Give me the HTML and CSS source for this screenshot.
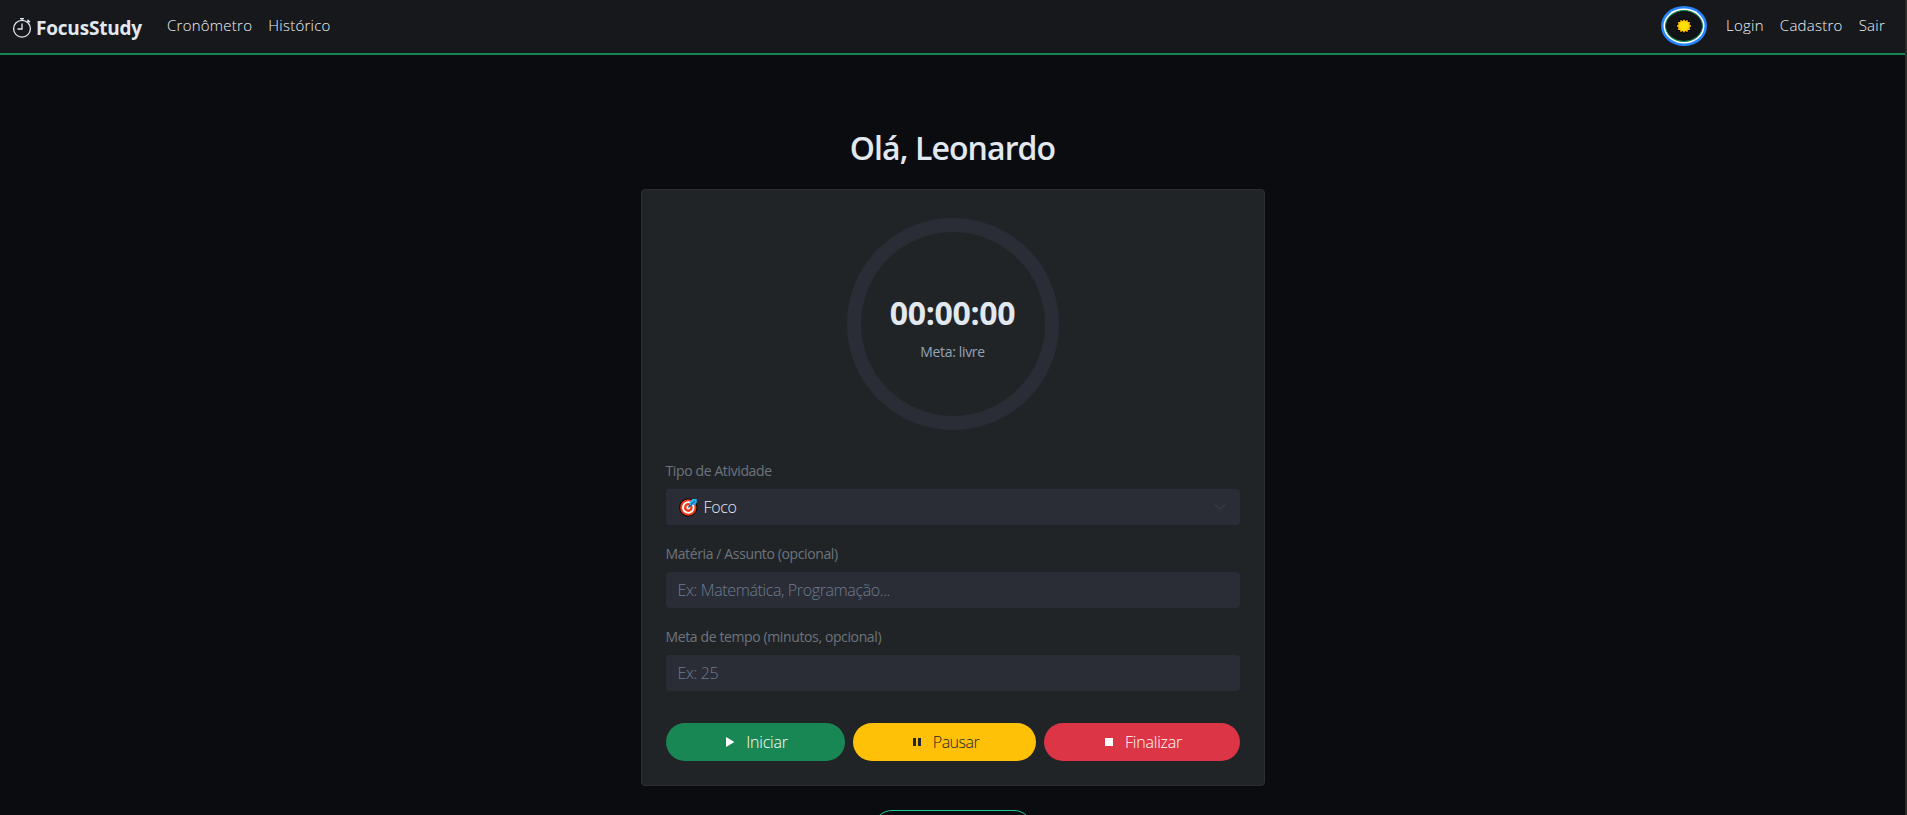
FILE: index.html
```html
<!DOCTYPE html>
<html lang="pt-BR">
<head>
    <meta charset="UTF-8">
    <meta name="viewport" content="width=device-width, initial-scale=1.0">
    <title>FocusStudy</title>
    <link rel="stylesheet" href="styles.css">
</head>
<body>
    <nav class="navbar">
        <a class="brand" href="#">
            <svg width="20" height="20" viewBox="0 0 20 20" fill="none" stroke="currentColor" stroke-width="1.3">
                <circle cx="10" cy="10.7" r="8.4"/>
                <path d="M8 .7h4M10 .7v2M10 5.500v5.500H5.500M15 4.500l2-2M15.500 1.800l2.500 2.500"/>
            </svg>
            <span>FocusStudy</span>
        </a>
        <div class="nav-left">
            <a class="nav-link" href="#">Cronômetro</a>
            <a class="nav-link" href="#">Histórico</a>
        </div>
        <div class="nav-right">
            <button class="theme-toggle" type="button" aria-label="Tema">
                <svg width="16" height="16" viewBox="0 0 16 16">
                    <path d="M8 1l1.200 2L11.500 1.800l.4 2.300 2.300-.1-.7 2.200L15.500 8l-2 1.800.7 2.200-2.300-.1-.4 2.300L9.200 13 8 15l-1.200-2-2.300 1.200-.4-2.300-2.300.1.7-2.200L.5 8l2-1.800L1.800 4l2.300.1.4-2.300L6.800 3z" fill="#ffb900" stroke="#000" stroke-width="1.600" paint-order="stroke"/>
                    <circle cx="8" cy="8" r="4.800" fill="#ffe000"/>
                </svg>
            </button>
            <a class="nav-link" href="#">Login</a>
            <a class="nav-link" href="#">Cadastro</a>
            <a class="nav-link" href="#">Sair</a>
        </div>
    </nav>

    <main class="container">
        <h2 class="title">Olá, Leonardo</h2>

        <div class="card">
            <div class="timer">
                <div class="timer-display">00:00:00</div>
                <div class="timer-goal">Meta: livre</div>
            </div>

            <label class="form-label">Tipo de Atividade</label>
            <div class="field">
                <svg class="target" width="20" height="20" viewBox="0 0 20 20">
                    <circle cx="9.300" cy="10.500" r="8.700" fill="#f03a17" stroke="#000" stroke-width="1"/>
                    <circle cx="9.300" cy="10.500" r="5.300" fill="none" stroke="#fff" stroke-width="1.800"/>
                    <circle cx="9.300" cy="10.500" r="1.900" fill="#fff"/>
                    <path d="M9.300 10.500L16 4" stroke="#1265a8" stroke-width="1.600"/>
                    <path d="M11 8V4.500L13.500 2h4.200v3.500L15 8.200z" fill="#25b8f2"/>
                    <path d="M12 7.500L16 4" stroke="#1265a8" stroke-width="1.200"/>
                </svg>
                <span>Foco</span>
                <svg class="chevron" width="12" height="12" viewBox="0 0 16 16" fill="none" stroke="#343a40" stroke-width="2" stroke-linecap="round" stroke-linejoin="round">
                    <path d="M2 5l6 6 6-6"/>
                </svg>
            </div>

            <label class="form-label" for="materia">Matéria / Assunto (opcional)</label>
            <input class="field" id="materia" type="text" placeholder="Ex: Matemática, Programação...">

            <label class="form-label" for="meta">Meta de tempo (minutos, opcional)</label>
            <input class="field" id="meta" type="text" placeholder="Ex: 25">

            <div class="actions">
                <button class="btn btn-start" type="button">
                    <svg width="8" height="10" viewBox="0 0 8 10" fill="currentColor"><path d="M0 0l8.500 5L0 10z"/></svg>
                    <span>Iniciar</span>
                </button>
                <button class="btn btn-pause" type="button">
                    <svg width="8" height="8" viewBox="0 0 8 8" fill="currentColor"><path d="M0 0h3v8H0zM5 0h3v8H5z"/></svg>
                    <span>Pausar</span>
                </button>
                <button class="btn btn-stop" type="button">
                    <svg width="8" height="8" viewBox="0 0 8 8" fill="currentColor"><path d="M0 0h8v8H0z"/></svg>
                    <span>Finalizar</span>
                </button>
            </div>
        </div>

        <button class="btn-outline" type="button" aria-label="Histórico"></button>
    </main>
</body>
</html>
```

FILE: styles.css
```css
* {
    box-sizing: border-box;
}

body {
    margin: 0;
    height: 100vh;
    overflow: hidden;
    font-family: "Open Sans", "Noto Sans", sans-serif;
    font-weight: 300;
    font-size: 16px;
    line-height: 24px;
    color: #e2e8f0;
    background: #0b0c10;
    border-right: 2px solid #2c2c2c;
}

/* Navbar */
.navbar {
    display: flex;
    align-items: center;
    height: 55px;
    padding: 0 20px 0 12px;
    background: #17181c;
    border-bottom: 2px solid #198754;
}

.brand {
    display: flex;
    align-items: center;
    gap: 4px;
    width: 155px;
    padding-top: 2px;
    color: #e2e8f0;
    font-size: 19px;
    font-weight: 700;
    letter-spacing: -0.2px;
    text-decoration: none;
}

.nav-left,
.nav-right {
    display: flex;
    align-items: center;
    gap: 16px;
    padding-bottom: 2px;
}

.nav-right {
    margin-left: auto;
}

.nav-link {
    padding-bottom: 2px;
    color: #eef2f7;
    font-size: 15px;
    letter-spacing: 0.25px;
    text-decoration: none;
}

.theme-toggle {
    display: flex;
    align-items: center;
    justify-content: center;
    width: 38px;
    height: 32px;
    margin-right: 7px;
    padding: 0;
    background: #111317;
    border: 1px solid #198754;
    border-radius: 50%;
    box-shadow: 0 0 0 1.5px #fff, 0 0 0 4px #2684ff;
}

/* Conteúdo */
.container {
    width: 624px;
    margin: 0 auto;
    padding-top: 74px;
}

.title {
    margin: 0 0 22px;
    font-size: 32px;
    font-weight: 600;
    letter-spacing: -0.9px;
    line-height: 38px;
    text-align: center;
}

.card {
    height: 597px;
    padding: 28px 24px 24px;
    background: #212427;
    border: 1px solid #2a2d32;
    border-radius: 4px;
}

.timer {
    display: flex;
    flex-direction: column;
    align-items: center;
    width: 212px;
    height: 212px;
    margin: 0 auto 29px;
    padding-top: 61px;
    border: 14px solid #2a2d35;
    border-radius: 50%;
}

.timer-display {
    font-size: 32px;
    font-weight: 700;
    letter-spacing: -0.3px;
    line-height: 40px;
}

.timer-goal {
    margin-top: 9px;
    color: #94a3b8;
    font-size: 14px;
    font-weight: 400;
    letter-spacing: -0.35px;
    line-height: 20px;
}

.form-label {
    display: block;
    margin-bottom: 6px;
    color: #6c757d;
    font-size: 14px;
    font-weight: 400;
    letter-spacing: -0.38px;
    line-height: 24px;
}

.field {
    display: flex;
    align-items: center;
    width: 100%;
    height: 36px;
    margin-bottom: 17px;
    padding: 0 12px;
    background: #2a2d35;
    border: 0;
    border-radius: 4px;
    color: #e2e8f0;
    font: inherit;
    letter-spacing: -0.3px;
}

.field::placeholder {
    color: #6a7b93;
    letter-spacing: -0.38px;
    opacity: 1;
}

.target {
    margin-left: 1px;
    margin-right: 5px;
}

.chevron {
    margin-left: auto;
    margin-right: 2px;
}

/* Botões */
.actions {
    display: flex;
    gap: 8px;
    margin-top: 32px;
}

.btn {
    display: flex;
    align-items: center;
    justify-content: center;
    gap: 12px;
    height: 38px;
    padding: 0 0 0 4px;
    border: 0;
    border-radius: 19px;
    color: #fff;
    font: inherit;
    letter-spacing: -0.2px;
}

.btn-start {
    width: 179px;
    background: #198754;
}

.btn-pause {
    width: 183px;
    background: #ffc107;
    color: #212529;
    letter-spacing: -0.5px;
}

.btn-stop {
    width: 196px;
    background: #dc3545;
}

.btn-outline {
    display: block;
    width: 160px;
    height: 38px;
    margin: 24px auto 0;
    background: transparent;
    border: 1px solid #20c997;
    border-radius: 19px;
}
```
